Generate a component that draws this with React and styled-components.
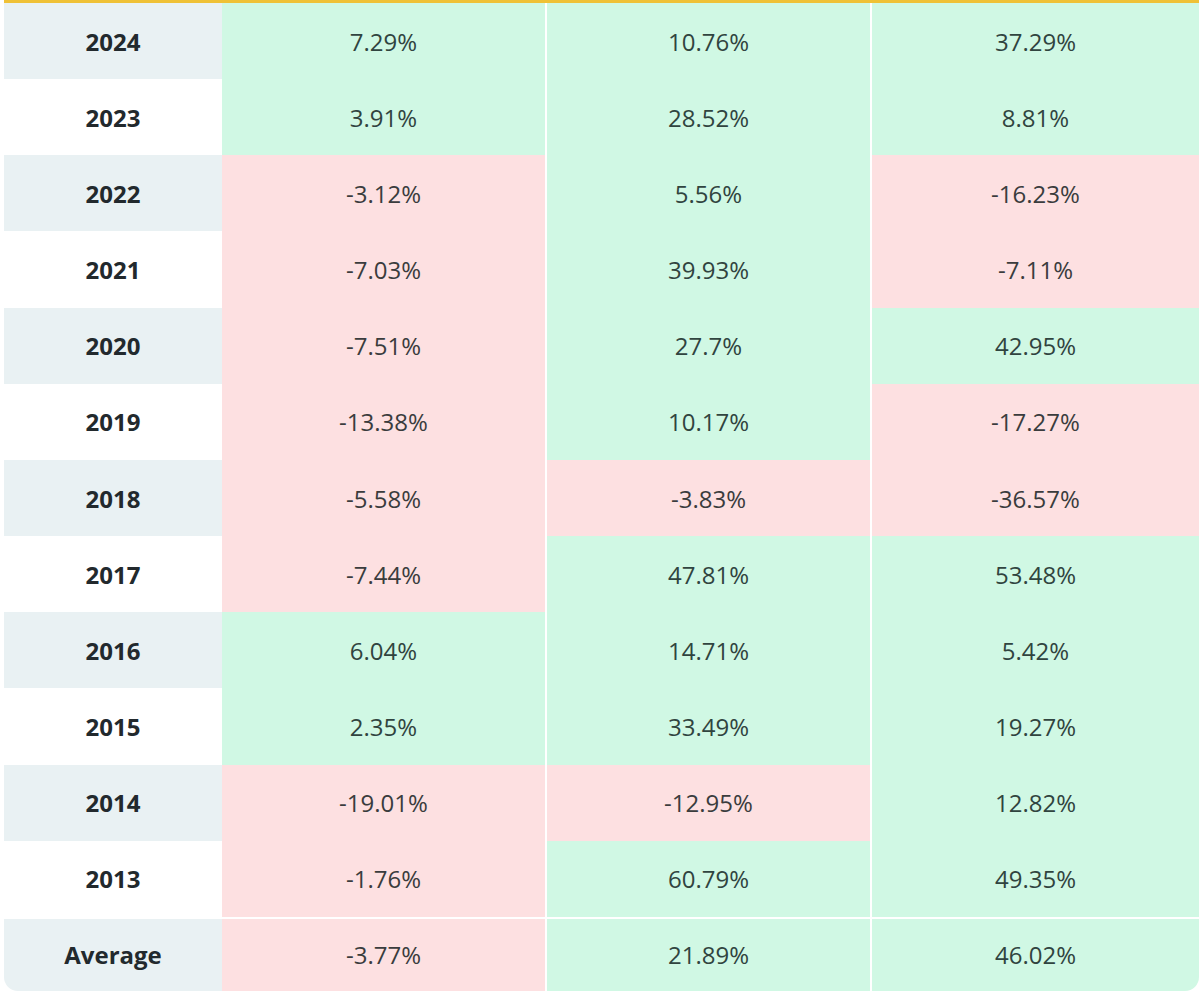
import React from "react";
import styled, { createGlobalStyle } from "styled-components";

const GlobalStyle = createGlobalStyle`
  html, body {
    margin: 0;
    padding: 0;
    background: #ffffff;
  }
  body {
    font-family: "Open Sans", "Noto Sans", sans-serif;
  }
`;

const rows = [
  ["2024", "7.29%", "10.76%", "37.29%"],
  ["2023", "3.91%", "28.52%", "8.81%"],
  ["2022", "-3.12%", "5.56%", "-16.23%"],
  ["2021", "-7.03%", "39.93%", "-7.11%"],
  ["2020", "-7.51%", "27.7%", "42.95%"],
  ["2019", "-13.38%", "10.17%", "-17.27%"],
  ["2018", "-5.58%", "-3.83%", "-36.57%"],
  ["2017", "-7.44%", "47.81%", "53.48%"],
  ["2016", "6.04%", "14.71%", "5.42%"],
  ["2015", "2.35%", "33.49%", "19.27%"],
  ["2014", "-19.01%", "-12.95%", "12.82%"],
  ["2013", "-1.76%", "60.79%", "49.35%"],
];

const average = ["Average", "-3.77%", "21.89%", "46.02%"];

function ReturnsTable() {
  return (
    <Table>
      {rows.map((row, i) => (
        <Row key={row[0]}>
          <YearCell $shaded={i % 2 === 0}>{row[0]}</YearCell>
          {row.slice(1).map((value, j) => (
            <ValueCell key={j} $negative={value.startsWith("-")}>
              {value}
            </ValueCell>
          ))}
        </Row>
      ))}
      <Row $total>
        <YearCell $shaded>{average[0]}</YearCell>
        {average.slice(1).map((value, j) => (
          <ValueCell key={j} $negative={value.startsWith("-")}>
            {value}
          </ValueCell>
        ))}
      </Row>
    </Table>
  );
}

export default function App() {
  return (
    <>
      <GlobalStyle />
      <ReturnsTable />
    </>
  );
}

const Table = styled.div`
  width: 1195px;
  margin-left: 4px;
  border-top: 3px solid #efc136;
  border-radius: 0 0 14px 14px;
  overflow: hidden;
  background: #ffffff;
`;

const Row = styled.div`
  display: grid;
  grid-template-columns: 216px 323px 323px 327px;
  column-gap: 2px;
  height: ${(p) => (p.$total ? "74px" : "76.17px")};
  box-sizing: border-box;
  border-top: ${(p) => (p.$total ? "2px solid #ffffff" : "none")};

  /* year column runs straight into the first value column */
  & > :first-child {
    margin-right: -2px;
  }
`;

const YearCell = styled.div`
  display: flex;
  align-items: center;
  justify-content: center;
  background: ${(p) => (p.$shaded ? "#e9f1f3" : "#ffffff")};
  color: #22292d;
  font-size: 24px;
  font-weight: 700;
`;

const ValueCell = styled.div`
  display: flex;
  align-items: center;
  justify-content: center;
  background: ${(p) => (p.$negative ? "#fde0e1" : "#d0f8e4")};
  color: ${(p) => (p.$negative ? "#3a3c3d" : "#30443f")};
  font-size: 24px;
  font-weight: 400;
`;
